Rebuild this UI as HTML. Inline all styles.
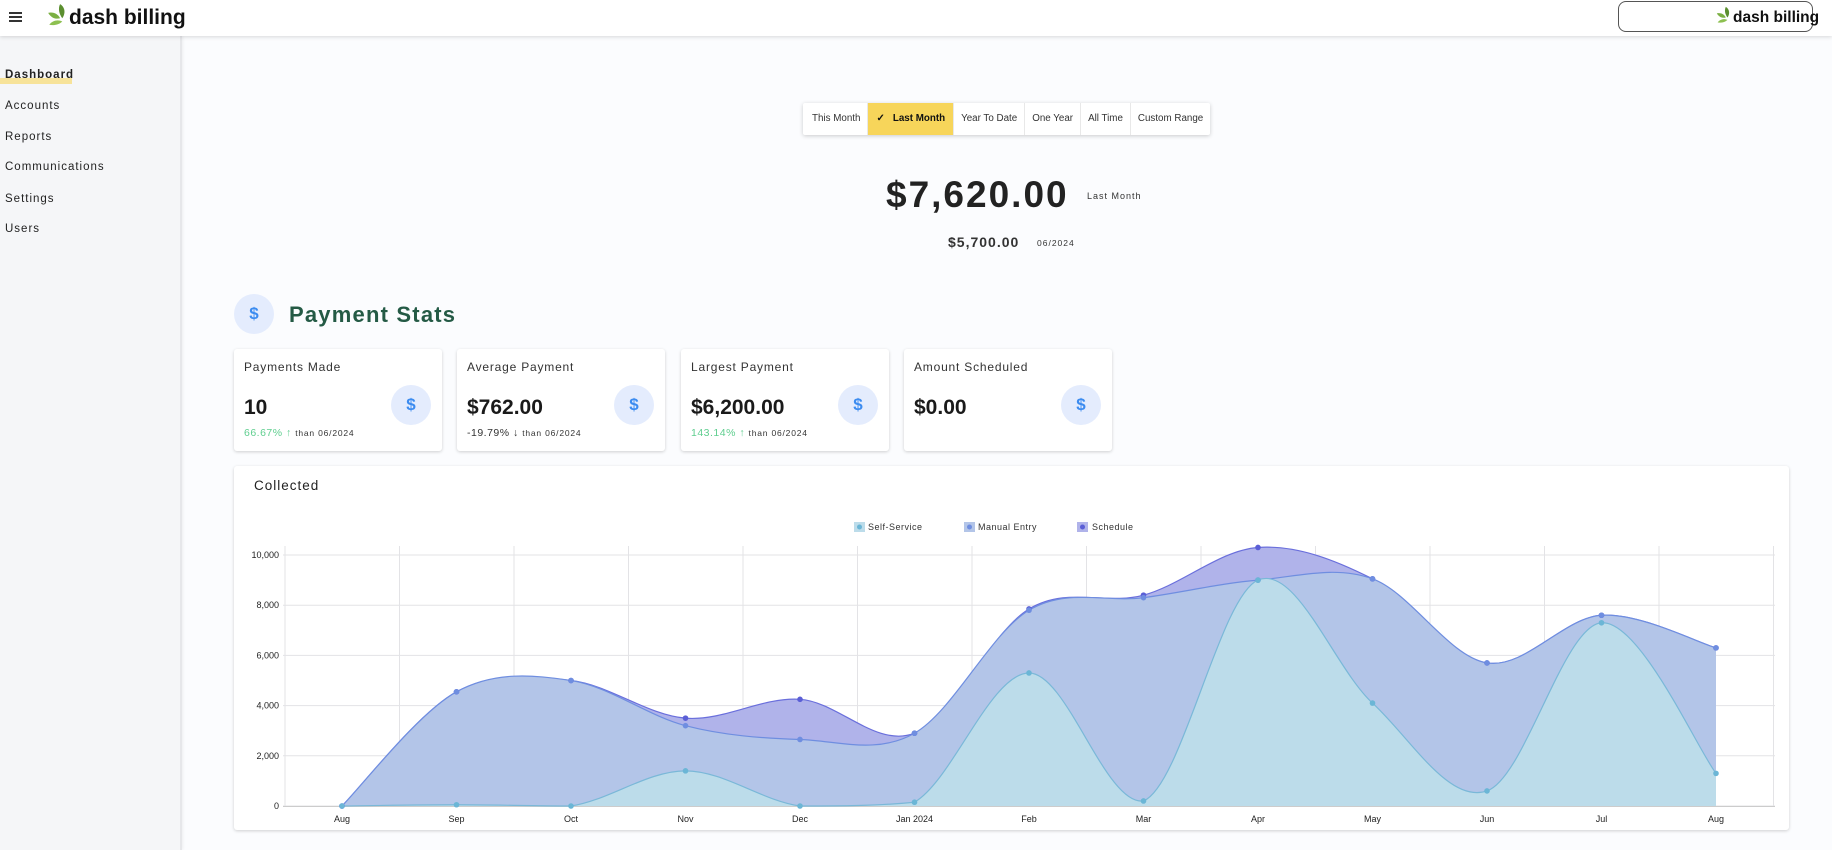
<!DOCTYPE html>
<html><head><meta charset="utf-8"><style>
*{margin:0;padding:0;box-sizing:border-box}
body{width:1832px;height:850px;overflow:hidden;background:#fbfcfe;font-family:"Liberation Sans",sans-serif;color:#222;position:relative}
.hdr{position:absolute;left:0;top:0;width:1832px;height:36px;background:#fff;box-shadow:0 1px 4px rgba(0,0,0,.15);z-index:3}
.side{position:absolute;left:0;top:36px;width:182px;height:814px;background:#f5f6f8;border-right:2px solid #e6e7ea;box-shadow:1px 0 3px rgba(0,0,0,.06)}
.nav{position:absolute;left:5px;font-size:11.5px;letter-spacing:1px;color:#222}
.abs{position:absolute}
.logo{font-weight:bold;font-size:21px;letter-spacing:0;color:#111}
.tabs{position:absolute;left:803px;top:103px;height:32px;display:flex;background:#fff;box-shadow:0 1px 4px rgba(0,0,0,.2);border-radius:2px;font-size:9.8px;color:#333}
.tabs div{padding:0 7px;line-height:32px;border-right:1px solid #e8e8e8}
.card{position:absolute;top:349px;width:208px;height:102px;background:#fff;border-radius:3px;box-shadow:0 1px 3px rgba(0,0,0,.18)}
.card .t{position:absolute;left:10px;top:11px;font-size:12px;letter-spacing:.8px;color:#333}
.card .v{position:absolute;left:10px;top:47px;font-size:21px;font-weight:bold;color:#1a1a1a}
.card .s{position:absolute;left:10px;top:78px;font-size:10.5px;letter-spacing:.5px;color:#333}
.card .s small{font-size:8.5px;letter-spacing:.8px}
.g{color:#5fce8f}
.circ{position:absolute;width:40px;height:40px;border-radius:50%;background:#e4ecfd;color:#3c8cf0;font-size:17px;font-weight:bold;text-align:center;line-height:40px}
.card .circ{left:157px;top:36px}
</style></head><body>
<div class="hdr">
  <div class="abs" style="left:9px;top:12px;width:13px;height:2px;background:#333;box-shadow:0 4px 0 #333,0 8px 0 #333"></div>
  <svg class="abs" style="left:47px;top:2px" width="24" height="26" viewBox="0 0 22 24"><path d="M12 2c5 3 5 9 2 13-3-4-4-9-2-13z" fill="#5b8f2f"/><path d="M1 10c5-1 9 1 11 5-4 1-8 0-11-5z" fill="#7bb043"/><path d="M2 21c3-4 8-5 12-3-3 3-8 4-12 3z" fill="#8dc050"/></svg>
  <div class="abs logo" style="left:69px;top:6px">dash billing</div>
  <div class="abs" style="left:1618px;top:1px;width:195px;height:31px;border:1px solid #555;border-radius:8px"></div>
  <svg class="abs" style="left:1716px;top:5px" width="18" height="20" viewBox="0 0 22 24"><path d="M12 2c5 3 5 9 2 13-3-4-4-9-2-13z" fill="#5b8f2f"/><path d="M1 10c5-1 9 1 11 5-4 1-8 0-11-5z" fill="#7bb043"/><path d="M2 21c3-4 8-5 12-3-3 3-8 4-12 3z" fill="#8dc050"/></svg>
  <div class="abs logo" style="left:1733px;top:9px;font-size:15.5px">dash billing</div>
</div>
<div class="side">
  <div class="abs" style="left:0;top:42px;width:72px;height:6px;background:#f7e39a"></div>
  <div class="nav" style="top:33px;font-weight:bold">Dashboard</div>
  <div class="nav" style="top:64px">Accounts</div>
  <div class="nav" style="top:95px">Reports</div>
  <div class="nav" style="top:125px">Communications</div>
  <div class="nav" style="top:157px">Settings</div>
  <div class="nav" style="top:187px">Users</div>
</div>
<div class="tabs">
  <div style="padding:0 7px 0 9px">This Month</div>
  <div style="background:#f7d55a;font-weight:bold;color:#111;padding:0 8px">&#10003;&nbsp;&nbsp;&nbsp;Last Month</div>
  <div>Year To Date</div><div>One Year</div><div>All Time</div><div style="border:0">Custom Range</div>
</div>
<div class="abs" style="left:886px;top:174px;font-size:37px;font-weight:bold;letter-spacing:2px;color:#222">$7,620.00</div>
<div class="abs" style="left:1087px;top:191px;font-size:9px;letter-spacing:1px;color:#333">Last Month</div>
<div class="abs" style="left:948px;top:234px;font-size:14px;font-weight:bold;letter-spacing:1px;color:#333">$5,700.00</div>
<div class="abs" style="left:1037px;top:238px;font-size:8.5px;letter-spacing:1px;color:#333">06/2024</div>
<div class="circ" style="left:234px;top:294px">$</div>
<div class="abs" style="left:289px;top:302px;font-size:22px;font-weight:bold;letter-spacing:1.2px;color:#245a45">Payment Stats</div>
<div class="card" style="left:234px"><div class="t">Payments Made</div><div class="v">10</div><div class="s"><span class="g">66.67% &#8593;</span> <small>than 06/2024</small></div><div class="circ">$</div></div>
<div class="card" style="left:457px"><div class="t">Average Payment</div><div class="v">$762.00</div><div class="s">-19.79% &#8595; <small>than 06/2024</small></div><div class="circ">$</div></div>
<div class="card" style="left:681px"><div class="t">Largest Payment</div><div class="v">$6,200.00</div><div class="s"><span class="g">143.14% &#8593;</span> <small>than 06/2024</small></div><div class="circ">$</div></div>
<div class="card" style="left:904px"><div class="t">Amount Scheduled</div><div class="v">$0.00</div><div class="circ">$</div></div>
<div class="abs" style="left:234px;top:466px;width:1555px;height:364px;background:#fff;border-radius:3px;box-shadow:0 1px 3px rgba(0,0,0,.18)"></div>
<div class="abs" style="left:254px;top:478px;font-size:13.5px;letter-spacing:1px;color:#222">Collected</div>
<svg class="abs" style="left:0;top:0" width="1832" height="850" id="ch">
<g font-family="Liberation Sans" font-size="9" fill="#333" letter-spacing=".5">
<rect x="854" y="522" width="11" height="10" fill="#bcdcea"/><circle cx="859.5" cy="527" r="2.5" fill="#6bb6d6"/><text x="868" y="530">Self-Service</text>
<rect x="964" y="522" width="11" height="10" fill="#b3c5e8"/><circle cx="969.5" cy="527" r="2.5" fill="#6f8ee0"/><text x="978" y="530">Manual Entry</text>
<rect x="1077" y="522" width="11" height="10" fill="#b0b3ea"/><circle cx="1082.5" cy="527" r="2.5" fill="#5b5fd6"/><text x="1092" y="530">Schedule</text>
</g>
<g id="grid" stroke="#e3e3e6" stroke-width="1"></g>
<g id="areas"></g>
<g id="lbl" font-family="Liberation Sans" font-size="9" fill="#222"></g>
</svg>
<script>
var X0=342,DX=114.5,Y0=806,K=0.0251;
var months=["Aug","Sep","Oct","Nov","Dec","Jan 2024","Feb","Mar","Apr","May","Jun","Jul","Aug"];
var self=[0,50,0,1400,0,150,5300,200,9000,4100,600,7300,1300];
var man=[0,4550,5000,3200,2650,2900,7800,8300,9000,9050,5700,7600,6300];
var sch=[0,4550,5000,3500,4250,2900,7850,8400,10300,9050,5700,7600,6300];
var ns="http://www.w3.org/2000/svg";
function el(t,a,p){var e=document.createElementNS(ns,t);for(var k in a)e.setAttribute(k,a[k]);p.appendChild(e);return e}
var g=document.getElementById('grid'),L=document.getElementById('lbl'),A=document.getElementById('areas');
for(var v=0;v<=10000;v+=2000){var y=Y0-v*K;el('line',{x1:283,x2:1775,y1:y,y2:y},g);var t=el('text',{x:279,y:y+3,'text-anchor':'end'},L);t.textContent=v?v.toLocaleString('en-US'):'0';}
for(var i=0;i<=13;i++){var x=X0-57+i*DX;el('line',{x1:x,x2:x,y1:546,y2:806},g);}
el('line',{x1:283,x2:1775,y1:806.5,y2:806.5,stroke:'#ccc'},g);
months.forEach(function(m,i){var t=el('text',{x:X0+i*DX,y:822,'text-anchor':'middle'},L);t.textContent=m;});
function pts(d){return d.map(function(v,i){return [X0+i*DX,Y0-v*K]})}
function cl(y){return Math.min(y,Y0)}
function curve(p){var s="M"+p[0][0]+","+p[0][1];for(var i=0;i<p.length-1;i++){var p0=p[i-1]||p[i],p1=p[i],p2=p[i+1],p3=p[i+2]||p2;var t=6;s+=" C"+(p1[0]+(p2[0]-p0[0])/t)+","+cl(p1[1]+(p2[1]-p0[1])/t)+" "+(p2[0]-(p3[0]-p1[0])/t)+","+cl(p2[1]-(p3[1]-p1[1])/t)+" "+p2[0]+","+p2[1];}return s}
function area(d,f,st){var p=pts(d);el('path',{d:curve(p)+" L"+p[p.length-1][0]+","+Y0+" L"+p[0][0]+","+Y0+"Z",fill:f},A);el('path',{d:curve(p),fill:'none',stroke:st,'stroke-width':1.2},A);}
area(sch,'#b0b3ea','#6a6fdc');area(man,'#b3c5e8','#6f8ee0');area(self,'#bcdcea','#7ab8d8');
[[sch,'#5b5fd6'],[man,'#6f8ee0'],[self,'#6bb6d6']].forEach(function(a){pts(a[0]).forEach(function(p){el('circle',{cx:p[0],cy:p[1],r:2.8,fill:a[1]},A)})});
</script>
</body></html>
